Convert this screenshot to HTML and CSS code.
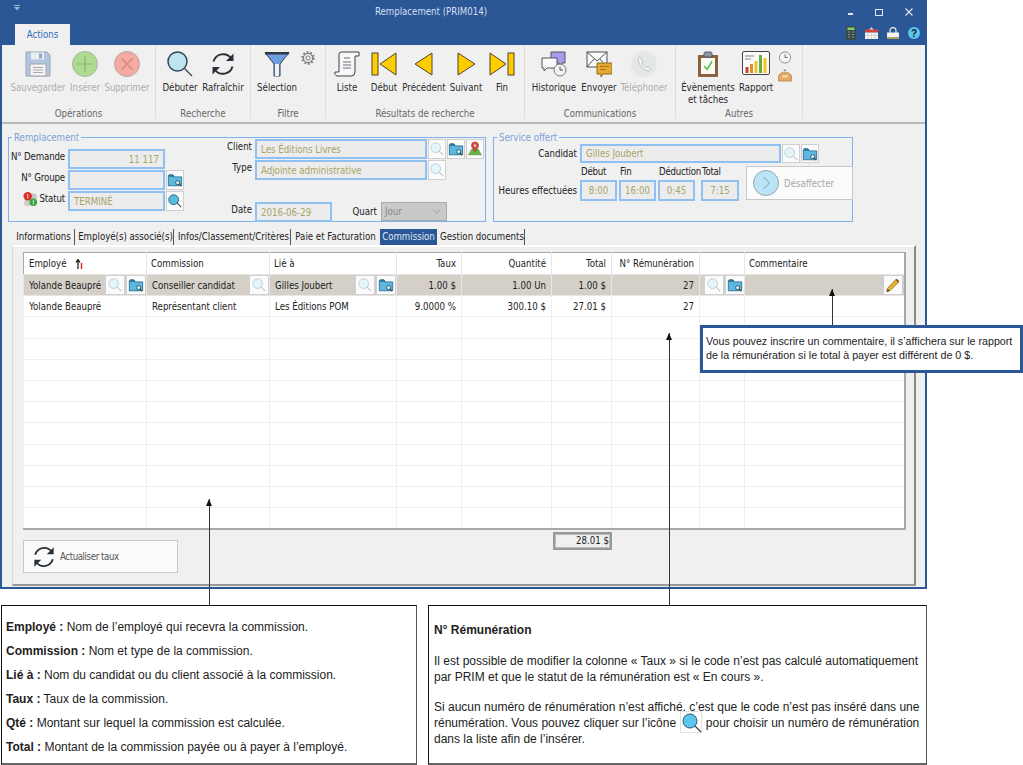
FILE: index.html
```html
<!DOCTYPE html>
<html lang="fr">
<head>
<meta charset="utf-8">
<title>Remplacement (PRIM014)</title>
<link rel="stylesheet" href="styles.css">
</head>
<body>
<svg class="defs" aria-hidden="true">
  <symbol id="i-search" viewBox="0 0 26 26"><circle cx="10.5" cy="10.5" r="9.5" fill="#bfe5ef" stroke="#33475a" stroke-width="1.5"/><path d="M17.5 17.5L25 25" stroke="#33475a" stroke-width="1.3"/></symbol>
  <symbol id="i-search-s" viewBox="0 0 18 18"><circle cx="7.5" cy="7.5" r="5.5" fill="#52bfe2" stroke="#33566a" stroke-width="1"/><path d="M11.5 11.5L16 16" stroke="#33475a" stroke-width="1.2"/></symbol>
  <symbol id="i-search-f" viewBox="0 0 18 18"><circle cx="7.5" cy="7.5" r="5.5" fill="#e4f4f8" stroke="#b4cdd5" stroke-width="1"/><path d="M11.5 11.5L16 16" stroke="#bcc8cc" stroke-width="1.2"/></symbol>
  <symbol id="i-folder" viewBox="0 0 18 18"><path d="M1.5 4.5V15.5H16.5V5.5H8L6.5 3H2.5Z" fill="#5cb8de" stroke="#2f6f94"/><path d="M2 4.5H8" stroke="#1f5f84" stroke-width="1.5"/><circle cx="12" cy="12" r="2.3" fill="#d8eef6" stroke="#27465a"/><path d="M13.7 13.7L16 16" stroke="#27465a" stroke-width="1.2"/></symbol>
  <symbol id="i-pin" viewBox="0 0 18 18"><path d="M1 16L5 9H13L17 16Z" fill="#6ab04a"/><path d="M9 12C6.5 8.500 5 7 5 5A4 4 0 0 1 13 5C13 7 11.500 8.500 9 12Z" fill="#cf4a3a" stroke="#8a3228" stroke-width=".6"/><circle cx="9" cy="5" r="1.4" fill="#f6d0c8"/></symbol>
  <symbol id="i-pencil" viewBox="0 0 18 18"><path d="M3 12.500L12.500 2.500L15.500 5.500L5.500 15.500L2 16.500Z" fill="#e8b32c" stroke="#7d6420" stroke-width=".8"/><path d="M12.500 2.500L15.500 5.500" stroke="#8f4a20" stroke-width="1.800"/><path d="M2 16.500L3 13.500L5 15.500Z" fill="#333"/></symbol>
  <symbol id="i-refresh" viewBox="0 0 26 26"><path d="M3.500 10.500A10 10 0 0 1 21 7" fill="none" stroke="#2a3038" stroke-width="2"/><path d="M23.500 2.500V10H16Z" fill="#2a3038"/><path d="M22.500 15.500A10 10 0 0 1 5 19" fill="none" stroke="#2a3038" stroke-width="2"/><path d="M2.500 23.500V16H10Z" fill="#2a3038"/></symbol>
  <symbol id="first" viewBox="0 0 26 26"><rect x="1" y="2" width="6" height="22" fill="#fc0" stroke="#4a4430"/><path d="M25 2V24L9 13Z" fill="#fc0" stroke="#4a4430" stroke-linejoin="round"/></symbol>
  <symbol id="last" viewBox="0 0 26 26"><rect x="19" y="2" width="6" height="22" fill="#fc0" stroke="#4a4430"/><path d="M1 2V24L17 13Z" fill="#fc0" stroke="#4a4430" stroke-linejoin="round"/></symbol>
  <symbol id="prev" viewBox="0 0 26 26"><path d="M21 2V24L4 13Z" fill="#fc0" stroke="#4a4430" stroke-linejoin="round"/></symbol>
  <symbol id="next" viewBox="0 0 26 26"><path d="M5 2V24L22 13Z" fill="#fc0" stroke="#4a4430" stroke-linejoin="round"/></symbol>
</svg>

<div class="page">
<main class="window">
  <header class="titlebar">
    <div class="title-top">
      <svg class="qa" viewBox="0 0 6 6"><path d="M0 0H6V1H0ZM0 2H6L3 5.500Z" fill="#9fb3cf"/></svg>
      <span class="title">Remplacement (PRIM014)</span>
      <div class="winctl">
        <span class="wc-min"></span>
        <span class="wc-max"></span>
        <svg class="wc-x" viewBox="0 0 8 8"><path d="M.5 .5L7.500 7.500M7.500 .5L.5 7.500" stroke="#dfe7f2" stroke-width="1.100"/></svg>
      </div>
    </div>
    <div class="title-tabs">
      <span class="rtab">Actions</span>
      <div class="sysicons">
        <svg class="si-calc" viewBox="0 0 10 14"><rect width="10" height="14" rx="1" fill="#3a4a4a"/><rect x="1.500" y="1.500" width="7" height="2.500" fill="#7bd06a"/><path d="M2 6H4M6 6H8M2 8.500H4M6 8.500H8M2 11H4M6 11H8" stroke="#8a9a9a"/></svg>
        <svg class="si-cal" viewBox="0 0 13 12"><path d="M6.500 0L9 3H4Z" fill="#ddd"/><rect y="2.500" width="13" height="3" fill="#d9413a"/><rect y="5.500" width="13" height="6.500" fill="#f4f4f4"/><path d="M3 6V12M6.500 6V12M10 6V12M0 8.500H13" stroke="#c4c4c4" stroke-width=".6"/></svg>
        <svg class="si-lock" viewBox="0 0 12 12"><path d="M3 6V3.500A3 3 0 0 1 9 3.500V6" fill="none" stroke="#e2e2e2" stroke-width="1.300"/><rect y="5.500" width="12" height="5" fill="#f2f2f2"/><rect y="10.500" width="12" height="1.500" fill="#b8a040"/></svg>
        <svg class="si-help" viewBox="0 0 12 12"><circle cx="6" cy="6" r="6" fill="#5cc6ee"/><text x="6" y="9.500" text-anchor="middle" class="si-q">?</text></svg>
      </div>
    </div>
  </header>

  <nav class="ribbon">
    <section class="rgroup g-op">
      <div class="rbtns">
        <div class="rb w60 off">
          <svg class="ico" viewBox="0 0 26 26"><path d="M1 1H22L25 4V25H1Z" fill="#b3c4de" stroke="#9aa5b5"/><rect x="6" y="1.500" width="13" height="7" fill="#e8edf4"/><rect x="14" y="2.500" width="3" height="5" fill="#9aa8be"/><rect x="5" y="13" width="16" height="12" fill="#f4f4f4" stroke="#a5a5a5"/><path d="M8 16.500H18M8 19H18M8 21.500H18" stroke="#a8a8a8"/></svg>
          <span>Sauvegarder</span>
        </div>
        <div class="rb w34 off">
          <svg class="ico" viewBox="0 0 26 26"><circle cx="13" cy="13" r="12.500" fill="#aedc8f" stroke="#aab0a8"/><path d="M13 5V21M5 13H21" stroke="#8ab56c" stroke-width="1.200"/></svg>
          <span>Insérer</span>
        </div>
        <div class="rb w50 off">
          <svg class="ico" viewBox="0 0 26 26"><circle cx="13" cy="13" r="12.500" fill="#f3aba3" stroke="#b4a8a6"/><path d="M7.500 7.500L18.500 18.500M18.500 7.500L7.500 18.500" stroke="#d4857c" stroke-width="1.200"/></svg>
          <span>Supprimer</span>
        </div>
      </div>
      <h2>Opérations</h2>
    </section>
    <section class="rgroup g-rech">
      <div class="rbtns">
        <div class="rb w46"><svg class="ico"><use href="#i-search"/></svg><span>Débuter</span></div>
        <div class="rb w40"><svg class="ico"><use href="#i-refresh"/></svg><span>Rafraîchir</span></div>
      </div>
      <h2>Recherche</h2>
    </section>
    <section class="rgroup g-filt">
      <div class="rbtns">
        <div class="rb w42">
          <svg class="ico" viewBox="0 0 26 26"><path d="M1 1.500H25L16 13V25H10V13Z" fill="#6e9fe2" stroke="#36404c" stroke-linejoin="round"/><rect x="1" y="1" width="24" height="2.500" fill="#2f3a46"/><rect x="11" y="13" width="4" height="12" fill="#f0f0f0"/></svg>
          <span>Sélection</span>
        </div>
        <svg class="gear" viewBox="0 0 14 14"><circle cx="7" cy="7" r="4.700" fill="#e6e6e6" stroke="#6c6c6c" stroke-width="1"/><circle cx="7" cy="7" r="5.800" fill="none" stroke="#7a7a7a" stroke-width="1.800" stroke-dasharray="1.800 1.800"/><circle cx="7" cy="7" r="2" fill="#f6f6f6" stroke="#777" stroke-width=".9"/></svg>
      </div>
      <h2>Filtre</h2>
    </section>
    <section class="rgroup g-res">
      <div class="rbtns">
        <div class="rb w34">
          <svg class="ico" viewBox="0 0 26 26"><path d="M5 21V3A2.500 2.500 0 0 1 7.500 1H25V5H21V21A4 4 0 0 1 17 25H3A3 3 0 0 1 1 21H5" fill="#f7f7f7" stroke="#3a4048" stroke-linejoin="round"/><path d="M10 7H16M9 11H17M9 14H17M9 17H17" stroke="#6a7078"/></svg>
          <span>Liste</span>
        </div>
        <div class="rb w40"><svg class="ico"><use href="#first"/></svg><span>Début</span></div>
        <div class="rb w40"><svg class="ico"><use href="#prev"/></svg><span>Précédent</span></div>
        <div class="rb w44"><svg class="ico"><use href="#next"/></svg><span>Suivant</span></div>
        <div class="rb w28"><svg class="ico"><use href="#last"/></svg><span>Fin</span></div>
      </div>
      <h2>Résultats de recherche</h2>
    </section>
    <section class="rgroup g-com">
      <div class="rbtns">
        <div class="rb w52">
          <svg class="ico" viewBox="0 0 26 26"><path d="M10 1H24V12H21V15L18 12H10Z" fill="#a79df0" stroke="#555"/><path d="M1 7H16V17H6L3 20V17H1Z" fill="#fafafa" stroke="#555"/><circle cx="19" cy="19" r="6" fill="#f2f2f2" stroke="#777"/><path d="M19 15.500V19H22" fill="none" stroke="#555"/></svg>
          <span>Historique</span>
        </div>
        <div class="rb w38">
          <svg class="ico" viewBox="0 0 26 26"><rect x="1" y="1" width="20" height="15" fill="#fafafa" stroke="#4a4f55"/><path d="M1 1L11 10L21 1M1 16L8 8M21 16L14 8" fill="none" stroke="#4a4f55"/><path d="M11 12H26V23H17L15 26V23H11Z" fill="#e6a92e" stroke="#8a6a20"/><path d="M14 15.500H23M14 18.500H20" stroke="#9a7420"/></svg>
          <span>Envoyer</span>
        </div>
        <div class="rb w52 off">
          <svg class="ico" viewBox="0 0 26 26"><circle cx="13" cy="13" r="13" fill="#e3e8e6"/><path d="M9 6C7 7 7 9 8 12C10 16 13 19 17 20C19 20 20 19 20 18L17 15.500L15 16.500C13 15.500 11.500 13.500 11 11.500L12 10Z" fill="#f4f4f2" stroke="#bcc4c0"/></svg>
          <span>Téléphoner</span>
        </div>
      </div>
      <h2>Communications</h2>
    </section>
    <section class="rgroup g-aut">
      <div class="rbtns">
        <div class="rb w52">
          <svg class="ico" viewBox="0 0 26 26"><rect x="3" y="4" width="20" height="22" fill="#8a6240"/><rect x="6" y="7" width="14" height="16" fill="#fbfbf4"/><rect x="9" y="1" width="8" height="5" rx="1.500" fill="#8c98a4" stroke="#556"/><path d="M9 15L12 18.500L17 10.500" fill="none" stroke="#4fc04a" stroke-width="1.500"/></svg>
          <span>Évènements<br>et tâches</span>
        </div>
        <div class="rb w44">
          <svg class="ico wide" viewBox="0 0 28 24"><rect x=".5" y=".5" width="27" height="23" rx="1.500" fill="#fafafa" stroke="#444"/><path d="M3 5H12M3 8H9" stroke="#aaa" stroke-width="1.500"/><rect x="3.500" y="16" width="3" height="6" fill="#c8402e"/><rect x="8" y="13" width="3" height="9" fill="#e08a2a"/><rect x="12.500" y="10" width="3" height="12" fill="#eec22a"/><rect x="17" y="4" width="3" height="18" fill="#5fae3e"/><rect x="21.500" y="7" width="3" height="15" fill="#f2c81e"/></svg>
          <span>Rapport</span>
        </div>
        <div class="rb-small">
          <svg class="small" viewBox="0 0 14 14"><circle cx="7" cy="7" r="6" fill="#f6f6f6" stroke="#888"/><path d="M7 3.500V7H10" fill="none" stroke="#666"/></svg>
          <svg class="small" viewBox="0 0 14 14"><path d="M0 7L3 4H11L14 7V13H0Z" fill="#e4a860" stroke="#a87a3a" stroke-width=".7"/><path d="M4 7H10V9H4Z" fill="#f7e2c0"/><path d="M7 0L9 2.500H5Z" fill="#8a8f96"/></svg>
        </div>
      </div>
      <h2>Autres</h2>
    </section>
  </nav>

  <div class="content">
    <div class="forms">
      <section class="box box-rem">
        <span class="legend">Remplacement</span>
        <div class="rem-left">
          <div class="row"><label class="lb lb-l">N° Demande</label><span class="field f-l num">11 117</span></div>
          <div class="row r20"><label class="lb lb-l">N° Groupe</label><span class="field f-l"></span><span class="ibtn"><svg><use href="#i-folder"/></svg></span></div>
          <div class="row"><label class="lb lb-l"><svg class="st-ico" viewBox="0 0 16 16"><circle cx="11" cy="6" r="3.800" fill="#c4c4c4"/><circle cx="5" cy="12" r="3.800" fill="#ccc"/><circle cx="5" cy="5" r="4.500" fill="#d8322e"/><circle cx="11" cy="11.500" r="4" fill="#3aa53a"/><path d="M5 2.500V7.500M11 9V14" stroke="#fff" stroke-width=".8"/></svg>Statut</label><span class="field f-l">TERMINÉ</span><span class="ibtn"><svg><use href="#i-search-s"/></svg></span></div>
        </div>
        <div class="rem-right">
          <div class="row r20"><label class="lb lb-r">Client</label><span class="field f-r">Les Éditions Livres</span><span class="ibtn"><svg><use href="#i-search-f"/></svg></span><span class="ibtn"><svg><use href="#i-folder"/></svg></span><span class="ibtn"><svg><use href="#i-pin"/></svg></span></div>
          <div class="row"><label class="lb lb-r">Type</label><span class="field f-r">Adjointe administrative</span><span class="ibtn"><svg><use href="#i-search-f"/></svg></span></div>
          <div class="row row-date"><label class="lb lb-r">Date</label><span class="field f-d">2016-06-29</span><label class="lb lb-q">Quart</label>
            <span class="select">Jour<svg viewBox="0 0 10 6"><path d="M1 1L5 5L9 1" fill="none" stroke="#999"/></svg></span></div>
        </div>
      </section>

      <section class="box box-srv">
        <span class="legend">Service offert</span>
        <div class="row srv-cand"><label class="lb lb-s">Candidat</label><span class="field f-c">Gilles Joubert</span><span class="ibtn"><svg><use href="#i-search-f"/></svg></span><span class="ibtn"><svg><use href="#i-folder"/></svg></span></div>
        <div class="srv-hours">
          <label class="lb lb-s lb-h">Heures effectuées</label>
          <div class="h-col h37"><span class="h-lb">Début</span><span class="field f-h">8:00</span></div>
          <div class="h-col h37"><span class="h-lb">Fin</span><span class="field f-h">16:00</span></div>
          <div class="h-col h37"><span class="h-lb">Déduction</span><span class="field f-h">0:45</span></div>
          <div class="h-col h38"><span class="h-lb">Total</span><span class="field f-h">7:15</span></div>
          <div class="desaff">
            <svg viewBox="0 0 26 26"><circle cx="13" cy="13" r="12.500" fill="#b9e5f6" stroke="#9ba7ad"/><path d="M10.500 7L16.500 13L10.500 19" fill="none" stroke="#8d9aa1"/></svg>
            <span>Désaffecter</span>
          </div>
        </div>
      </section>
    </div>

    <div class="tabs">
      <span class="tab t1">Informations</span>
      <span class="tab t2">Employé(s) associé(s)</span>
      <span class="tab t3">Infos/Classement/Critères</span>
      <span class="tab t4">Paie et Facturation</span>
      <span class="tab t5 active">Commission</span>
      <span class="tab t6">Gestion documents</span>
    </div>

    <div class="panel">
      <table class="grid">
        <colgroup><col class="c1"><col class="c2"><col class="c3"><col class="c4"><col class="c5"><col class="c6"><col class="c7"><col class="c8"><col class="c9"></colgroup>
        <thead>
          <tr><th><span class="th-emp">Employé<svg class="sort" viewBox="0 0 8 10"><path d="M3 10V2M1 3.500L3 .5L5 3.500" fill="none" stroke="#111" stroke-width="1.200"/><path d="M6.500 4V10" stroke="#d22" stroke-width="1.400"/></svg></span></th><th>Commission</th><th>Lié à</th><th class="r">Taux</th><th class="r">Quantité</th><th class="r">Total</th><th class="r">N° Rémunération</th><th></th><th>Commentaire</th></tr>
        </thead>
        <tbody>
          <tr class="sel">
            <td><div class="cell">Yolande Beaupré<span class="cbtns"><span class="ibtn"><svg><use href="#i-search-f"/></svg></span><span class="ibtn"><svg><use href="#i-folder"/></svg></span></span></div></td>
            <td><div class="cell">Conseiller candidat<span class="cbtns"><span class="ibtn"><svg><use href="#i-search-f"/></svg></span></span></div></td>
            <td><div class="cell">Gilles Joubert<span class="cbtns"><span class="ibtn"><svg><use href="#i-search-f"/></svg></span><span class="ibtn"><svg><use href="#i-folder"/></svg></span></span></div></td>
            <td class="r">1.00 $</td><td class="r">1.00 Un</td><td class="r">1.00 $</td><td class="r">27</td>
            <td><div class="cell cell-c"><span class="ibtn"><svg><use href="#i-search-f"/></svg></span><span class="ibtn"><svg><use href="#i-folder"/></svg></span></div></td>
            <td><div class="cell cell-e"><span class="ibtn"><svg><use href="#i-pencil"/></svg></span></div></td>
          </tr>
          <tr><td>Yolande Beaupré</td><td>Représentant client</td><td>Les Éditions POM</td><td class="r">9.0000 %</td><td class="r">300.10 $</td><td class="r">27.01 $</td><td class="r">27</td><td></td><td></td></tr>
          <tr><td></td><td></td><td></td><td></td><td></td><td></td><td></td><td></td><td></td></tr>
          <tr><td></td><td></td><td></td><td></td><td></td><td></td><td></td><td></td><td></td></tr>
          <tr><td></td><td></td><td></td><td></td><td></td><td></td><td></td><td></td><td></td></tr>
          <tr><td></td><td></td><td></td><td></td><td></td><td></td><td></td><td></td><td></td></tr>
          <tr><td></td><td></td><td></td><td></td><td></td><td></td><td></td><td></td><td></td></tr>
          <tr><td></td><td></td><td></td><td></td><td></td><td></td><td></td><td></td><td></td></tr>
          <tr><td></td><td></td><td></td><td></td><td></td><td></td><td></td><td></td><td></td></tr>
          <tr><td></td><td></td><td></td><td></td><td></td><td></td><td></td><td></td><td></td></tr>
          <tr><td></td><td></td><td></td><td></td><td></td><td></td><td></td><td></td><td></td></tr>
          <tr><td></td><td></td><td></td><td></td><td></td><td></td><td></td><td></td><td></td></tr>
        </tbody>
      </table>
      <div class="under">
        <div class="btn-act">
          <svg viewBox="0 0 26 26"><use href="#i-refresh"/></svg>
          <span>Actualiser taux</span>
        </div>
        <span class="sum">28.01 $</span>
      </div>
    </div>
  </div>
</main>

<div class="notes">
  <section class="note n1">
    <p><b>Employé :</b> Nom de l’employé qui recevra la commission.</p>
    <p><b>Commission :</b> Nom et type de la commission.</p>
    <p><b>Lié à :</b> Nom du candidat ou du client associé à la commission.</p>
    <p><b>Taux :</b> Taux de la commission.</p>
    <p><b>Qté :</b> Montant sur lequel la commission est calculée.</p>
    <p><b>Total :</b> Montant de la commission payée ou à payer à l’employé.</p>
  </section>
  <section class="note n2">
    <p class="n2-t"><b>N° Rémunération</b></p>
    <p>Il est possible de modifier la colonne « Taux » si le code n’est pas calculé automatiquement par PRIM et que le statut de la rémunération est « En cours ».</p>
    <p>Si aucun numéro de rénumération n’est affiché, c’est que le code n’est pas inséré dans une rénumération. Vous pouvez cliquer sur l’icône <span class="inl"><svg viewBox="0 0 22 22"><rect x=".5" y=".5" width="21" height="21" fill="#fff" stroke="#e2e2e2"/><circle cx="10" cy="10" r="7" fill="#5cc6ee" stroke="#33566a"/><path d="M15 15L21 21" stroke="#33475a" stroke-width="1.300"/></svg></span> pour choisir un numéro de rémunération dans la liste afin de l’insérer.</p>
  </section>
</div>

<div class="arrow a1"></div>
<div class="arrow a2"></div>
<div class="arrow a3"></div>
<aside class="callout">Vous pouvez inscrire un commentaire, il s’affichera sur le rapport de la rémunération si le total à payer est différent de 0 $.</aside>
</div>
</body>
</html>
```

FILE: styles.css
```css
* { box-sizing: border-box; }
html, body { margin: 0; padding: 0; background: #fff; }
body { font-family: "DejaVu Sans Condensed", "DejaVu Sans", sans-serif; font-size: 9.6px; color: #222; overflow: hidden; }
.defs { position: absolute; width: 0; height: 0; }
.page { position: relative; width: 1023px; height: 765px; overflow: hidden; }

/* window */
.window { width: 927px; height: 589px; border: 2px solid #2b5797; border-top-width: 1px; background: #f0f0f0; display: flex; flex-direction: column; }
.titlebar { height: 44px; background: #2b5797; flex: none; display: flex; flex-direction: column; margin: 0 -1px; }
.title-top { height: 22px; display: flex; align-items: center; position: relative; padding-left: 13px; }
.qa { width: 6px; height: 6px; margin-top: -8px; }
.title { flex: 1; text-align: center; padding-right: 6px; color: #d5dfee; font-size: 9.6px; margin-top: -2px; }
.winctl { display: flex; align-items: center; gap: 22px; padding-right: 11px; width: 78px; }
.wc-min { width: 5px; height: 2px; background: #dfe7f2; margin-top: 4px; }
.wc-max { width: 8px; height: 7px; border: 1px solid #dfe7f2; flex: none; }
.wc-x { width: 8px; height: 8px; flex: none; }
.title-tabs { height: 22px; display: flex; justify-content: space-between; padding-left: 14px; }
.rtab { width: 55px; height: 21px; background: #f0f0f0; color: #2f6fc0; text-align: center; line-height: 21px; margin-top: 1px; }
.sysicons { display: flex; align-items: center; gap: 9px; padding-right: 6px; height: 18px; margin-top: 1px; }
.si-calc { width: 10px; height: 14px; }
.si-cal { width: 13px; height: 12px; }
.si-lock { width: 12px; height: 12px; }
.si-help { width: 12px; height: 12px; margin-left: 0; }
.si-q { font: bold 10px "Liberation Sans", sans-serif; fill: #123; }

/* ribbon */
.ribbon { height: 79px; flex: none; display: flex; border-bottom: 2px solid #b9b9b9; background: #f0f0f0; }
.rgroup { display: flex; flex-direction: column; position: relative; border-right: 1px solid #dcdcdc; margin-bottom: 3px; flex: none; }
.rgroup h2 { margin: 0; font-weight: normal; font-size: 9.6px; color: #666; text-align: center; position: absolute; left: 0; right: 0; top: 63px; }
.rbtns { display: flex; padding-top: 6px; }
.g-op { width: 154px; padding-left: 6px; }
.g-op h2 { left: 2px; right: 2px; }
.g-rech { width: 95px; padding-left: 1px; }
.g-filt { width: 75px; padding-left: 5px; }
.g-res { width: 199px; padding-left: 4px; }
.g-com { width: 151px; padding-left: 3px; }
.g-aut { width: 127px; padding-left: 6px; }
.rb { display: flex; flex-direction: column; align-items: center; flex: none; white-space: nowrap; line-height: 12px; text-align: center; color: #2b2b2b; }
.rb span { margin-top: 4px; }
.rb.off { color: #aeaeae; }
.ico { width: 26px; height: 26px; margin-bottom: 1px; display: block; }
.ico.wide { width: 28px; height: 24px; margin-bottom: 3px; }
.w28 { width: 28px; } .w34 { width: 34px; } .w38 { width: 38px; } .w40 { width: 40px; } .w42 { width: 42px; }
.w44 { width: 44px; } .w46 { width: 46px; } .w50 { width: 50px; } .w52 { width: 52px; } .w60 { width: 60px; }
.gear { width: 14px; height: 14px; margin: 0 0 0 3px; }
.rb-small { display: flex; flex-direction: column; gap: 5px; padding-left: 0; }
.small { width: 14px; height: 13px; display: block; }

/* content and form groups */
.content { flex: 1; display: flex; flex-direction: column; min-height: 0; padding: 13px 9px 0 6px; }
.forms { display: flex; gap: 7px; height: 85px; flex: none; }
.box { border: 1px solid #7fb2ec; position: relative; }
.legend { position: absolute; top: -7px; left: 3px; padding: 0 2px; background: #f0f0f0; color: #7ba3d8; line-height: 13px; }
.box-rem { width: 478px; display: flex; }
.box-srv { width: 360px; }
.rem-left { width: 176px; padding-top: 11px; flex: none; }
.rem-right { padding-top: 1px; padding-left: 0; flex: none; }
.row { display: flex; align-items: stretch; height: 20px; margin-bottom: 1px; }
.r20 { margin-bottom: 1px; }
.lb { display: flex; align-items: center; justify-content: flex-end; line-height: 16px; color: #222; flex: none; white-space: nowrap; }
.lb-l { width: 56px; margin-right: 3px; align-items: flex-start; letter-spacing: -.15px; }
.lb-r { width: 60px; padding-right: 2px; margin-left: 9px; margin-right: 1px; align-items: flex-start; padding-top: 0; }
.field { display: flex; align-items: center; border: 2px solid #90c0f2; background: #ececec; color: #a8a468; padding: 0 4px; flex: none; white-space: nowrap; overflow: hidden; }
.f-l { width: 97px; }
.num { justify-content: flex-end; }
.f-r { width: 172px; }
.f-d { width: 77px; }
.f-c { width: 201px; }
.ibtn { width: 18px; height: 100%; flex: none; background: #fbfbfb; border: 1px solid #cfcfcf; display: flex; align-items: center; justify-content: center; margin-left: 1px; }
.ibtn svg { width: 16px; height: 16px; display: block; }
.st-ico { width: 15px; height: 16px; margin-right: 2px; flex: none; }
.row-date { margin-top: 22px; }
.lb-q { width: 49px; padding-right: 4px; }
.select { width: 66px; height: 19px; border: 1px solid #aaa; background: #c9c9c9; color: #888; display: flex; align-items: center; justify-content: space-between; padding: 0 5px 0 3px; }
.select svg { width: 9px; height: 5px; }
.srv-cand { margin-top: 6px; height: 19px; }
.lb-s { width: 83px; margin-right: 3px; }
.srv-hours { display: flex; margin-top: 3px; align-items: flex-start; }
.lb-h { height: 21px; margin-top: 14px; }
.h-col { display: flex; flex-direction: column; margin-right: 2px; flex: none; }
.h37 { width: 37px; }
.h38 { width: 38px; margin-left: 4px; margin-right: 7px; }
.h-lb { height: 14px; line-height: 12px; white-space: nowrap; padding-left: 1px; letter-spacing: -.25px; }
.f-h { height: 21px; justify-content: center; padding: 0; }
.desaff { width: 107px; height: 34px; background: #fbfbfb; border: 1px solid #c8c8c8; display: flex; align-items: center; padding-left: 6px; gap: 5px; color: #a8a8a8; flex: none; margin-top: 0; }
.desaff svg { width: 26px; height: 26px; flex: none; }

/* tabs */
.tabs { display: flex; height: 16px; margin-top: 7px; padding-left: 7px; flex: none; }
.tab { display: block; height: 16px; line-height: 16px; text-align: center; white-space: nowrap; border-right: 1px solid #555; flex: none; color: #222; }
.t1 { width: 60px; margin-right: 3px; padding-right: 2px; }
.t2 { width: 96px; margin-right: 3px; }
.t3 { width: 114px; margin-right: 3px; }
.t4 { width: 83px; margin-right: 3px; border-right: 0; }
.t5 { width: 57px; margin-right: 3px; }
.t6 { width: 85px; }
.tab.active { background: #2b5797; color: #dfe8f4; border-right: 0; }

/* panel + table */
.panel { flex: 1; margin-left: 4px; padding: 5px 10px 0 10px; border: 1px solid #dadada; border-right: 2px solid #888; border-bottom: 2px solid #999; border-top: 2px solid #fff; min-height: 0; margin-bottom: 1px; }
.grid { width: 882px; height: 278px; border-collapse: collapse; table-layout: fixed; background: #fff; border: 1px solid #a8a8a8; border-right-width: 2px; border-bottom-width: 2px; }
.c1 { width: 123px; } .c2 { width: 123px; } .c3 { width: 127px; } .c4 { width: 65px; } .c5 { width: 90px; }
.c6 { width: 60px; } .c7 { width: 88px; } .c8 { width: 45px; } .c9 { width: 160px; }
.grid th { height: 22px; font-weight: normal; text-align: left; padding: 0 4px; color: #222; border-right: 1px solid #e6e6e6; white-space: nowrap; }
.grid td { height: 21px; padding: 0 5px; border: 1px solid #efefef; white-space: nowrap; color: #222; overflow: hidden; }
.grid .r { text-align: right; padding-right: 5px; }
.grid tr.sel td { background: #d4d0c8; height: 21px; padding: 0 0 0 5px; border-color: #e8e6e2; }
.grid tr.sel td.r { padding-right: 5px; }
.th-emp { display: flex; align-items: center; padding-left: 1px; }
.sort { width: 8px; height: 10px; margin-left: 9px; }
.cell { display: flex; align-items: center; justify-content: space-between; height: 20px; }
.cbtns { display: flex; height: 20px; }
.cbtns .ibtn, .cell-c .ibtn, .cell-e .ibtn { width: 20px; height: 20px; }
.cell-c { justify-content: flex-start; margin-left: -2px; }
.cell-e { justify-content: flex-end; padding-right: 1px; }
.under { display: flex; justify-content: space-between; position: relative; align-items: flex-start; }
.btn-act { width: 155px; height: 33px; margin-top: 10px; background: #fbfbfb; border: 1px solid #c8c8c8; display: flex; align-items: center; gap: 4px; padding-left: 8px; color: #555; letter-spacing: -.4px; }
.btn-act svg { width: 24px; height: 26px; }
.sum { position: absolute; left: 530px; top: 2px; width: 59px; height: 18px; border: 2px solid #999; outline: 1px solid #bbb; outline-offset: -3px; background: #f0f0f0; text-align: right; line-height: 14px; padding-right: 1px; color: #222; }

/* notes */
.notes { display: flex; gap: 11px; margin-top: 16px; padding-left: 1px; font-family: "Liberation Sans", Arial, sans-serif; font-size: 12px; color: #222; }
.note { height: 160px; background: #fff; border: 1px solid #111; border-right: 1px solid #555; border-bottom: 2px solid #666; flex: none; }
.note p { margin: 0; }
.n1 { width: 416px; padding: 14px 4px 0; }
.n1 p { height: 24px; line-height: 14px; }
.n2 { width: 499px; padding: 16px 5px 0; line-height: 16px; }
.n2 p { margin-bottom: 14px; }
.n2 .n2-t { margin-bottom: 15px; }
.inl { display: inline-block; width: 22px; height: 16px; margin: 0 0 0 1px; position: relative; vertical-align: top; }
.inl svg { position: absolute; left: 0; top: -4px; width: 22px; height: 22px; }

/* overlays */
.arrow { position: absolute; width: 1px; background: #333; }
.arrow::before { content: ""; position: absolute; top: 0; left: -3px; border-left: 3.500px solid transparent; border-right: 3.500px solid transparent; border-bottom: 7px solid #111; }
.a1 { left: 209px; top: 499px; height: 106px; }
.a2 { left: 669px; top: 333px; height: 272px; }
.a3 { left: 832px; top: 289px; height: 36px; }
.callout { position: absolute; left: 700px; top: 325px; width: 323px; height: 48px; background: #fff; border: 3px solid #2b5797; padding: 6px 5px 0 3px; font-family: "Liberation Sans", Arial, sans-serif; font-size: 10.700px; line-height: 14px; color: #222; }
```
